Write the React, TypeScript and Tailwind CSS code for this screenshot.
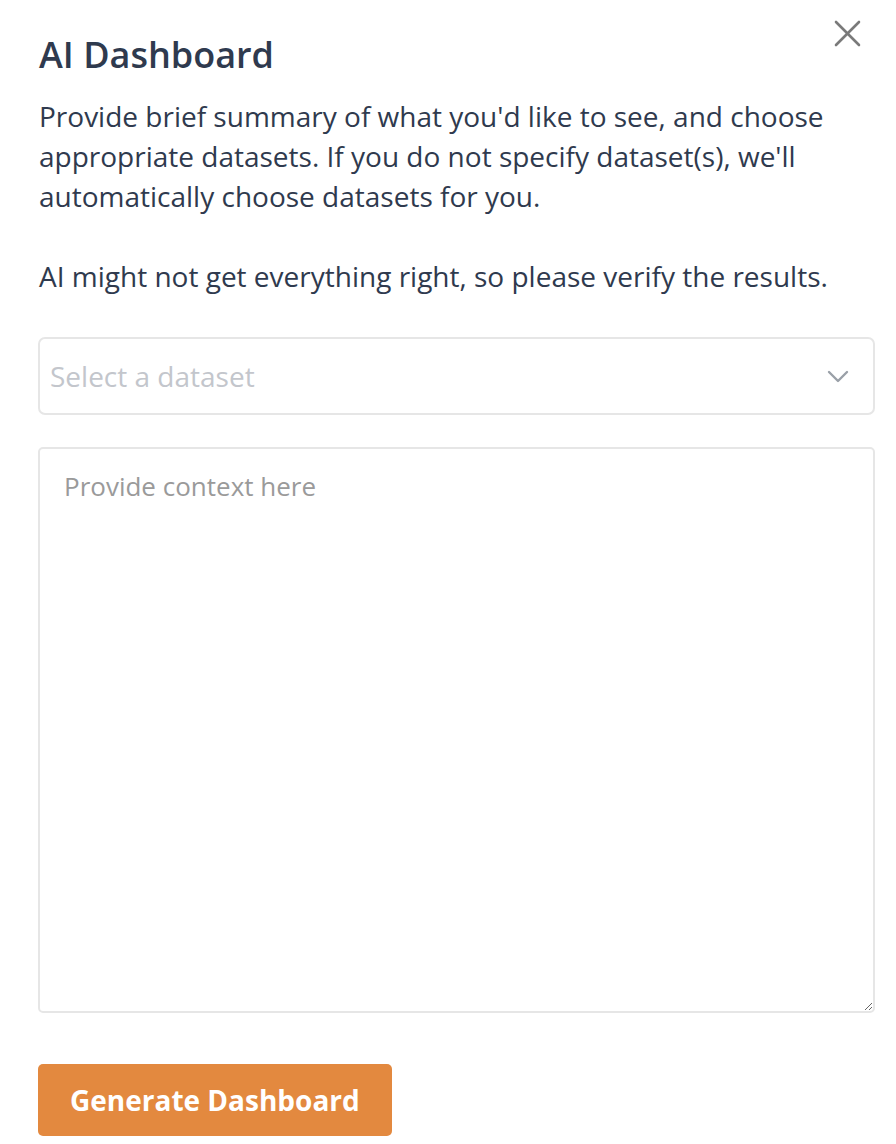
import React from "react";

export default function App() {
  return (
    <div
      className="relative w-[896px] h-[1144px] bg-white overflow-hidden"
      style={{ fontFamily: '"Open Sans", "Noto Sans", sans-serif' }}
    >
      <button className="absolute left-[833px] top-[19px] w-[29px] h-[29px] flex items-center justify-center" aria-label="Close">
        <svg width="27" height="27" viewBox="0 0 27 27" fill="none" stroke="#7a7a7a" strokeWidth="2.6" strokeLinecap="round">
          <line x1="2" y1="2" x2="25" y2="25" />
          <line x1="25" y1="2" x2="2" y2="25" />
        </svg>
      </button>

      <div className="pl-[38px] pr-[21px] pt-[35px] flex flex-col">
        <h1 className="pl-[1px] text-[36px] leading-[40px] font-semibold text-[#2f3a4e]">AI Dashboard</h1>
        <div className="pl-[1px] mt-[21px] text-[28px] leading-[40px] text-[#2f3a4e]">
          <p>
            Provide brief summary of what you'd like to see, and choose appropriate datasets. If you do not specify
            dataset(s), we'll automatically choose datasets for you.
          </p>
          <p className="mt-[40px]">AI might not get everything right, so please verify the results.</p>
        </div>

        <div className="mt-[41px] h-[78px] w-[837px] rounded-[7px] border-2 border-[#e6e6e6] flex items-center justify-between pl-[10px] pr-[24px]">
          <span className="text-[28px] text-[#c3c6cc]">Select a dataset</span>
          <svg width="22" height="13" viewBox="0 0 22 13" fill="none" stroke="#9aa0a8" strokeWidth="2.4" strokeLinecap="round" strokeLinejoin="round">
            <polyline points="2,2 11,11 20,2" />
          </svg>
        </div>

        <textarea
          className="mt-[32px] h-[566px] w-[837px] rounded-[5px] border-2 border-[#e6e6e6] px-[24px] pt-[19px] pb-[12px] text-[26px] leading-[36px] text-[#2f3a4e] placeholder:text-[#9a9a9a] outline-none"
          placeholder="Provide context here"
        />

        <div className="mt-[51px]">
          <button className="h-[72px] px-[32px] rounded-[5px] bg-[#e3893f] text-white text-[28px] font-bold">
            Generate Dashboard
          </button>
        </div>
      </div>
    </div>
  );
}
